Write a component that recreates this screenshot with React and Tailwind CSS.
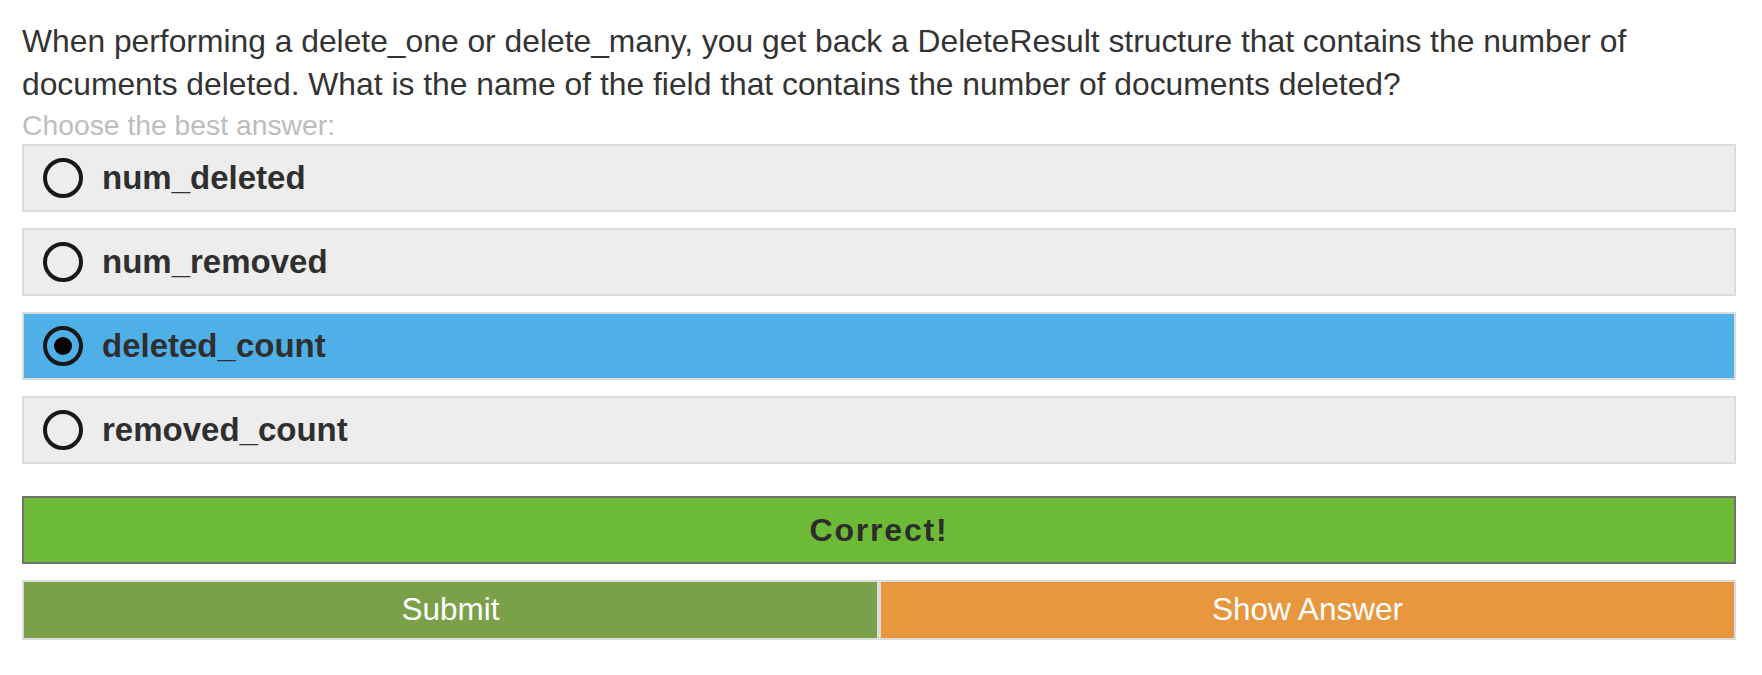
import { useState } from "react";

const options = ["num_deleted", "num_removed", "deleted_count", "removed_count"];

function Radio({ checked }) {
  return (
    <div className="w-[40px] h-[40px] rounded-full border-[4px] border-[#181818] flex items-center justify-center shrink-0">
      {checked && <div className="w-[18px] h-[18px] rounded-full bg-[#050505]" />}
    </div>
  );
}

export default function App() {
  const [selected, setSelected] = useState(2);

  return (
    <div className="bg-white min-h-[675px] pt-[20px] pl-[22px] font-['Liberation_Sans',Arial,sans-serif]">
      <div className="w-[1714px]">
        {/* Question */}
        <p className="text-[31.8px] leading-[43px] text-[#333]">
          When performing a delete_one or delete_many, you get back a DeleteResult structure that contains the number of
          documents deleted. What is the name of the field that contains the number of documents deleted?
        </p>
        <p className="text-[28.3px] leading-[38px] text-[#bdbdbd]">Choose the best answer:</p>

        {/* Options */}
        <div className="flex flex-col gap-[16px]">
          {options.map((opt, i) => (
            <button
              key={opt}
              onClick={() => setSelected(i)}
              className={`h-[68px] border-2 border-[#dcdcdc] flex items-center pl-[19px] gap-[19px] text-left ${
                selected === i ? "bg-[#4fafe7]" : "bg-[#ededed]"
              }`}
            >
              <Radio checked={selected === i} />
              <span className="text-[33px] font-bold text-[#2f2f2f]">{opt}</span>
            </button>
          ))}
        </div>

        {/* Result */}
        <div className="mt-[32px] h-[68px] border-2 border-[#727272] bg-[#6dba37] flex items-center justify-center">
          <span className="text-[32px] font-bold tracking-[1.8px] text-[#2d2d2d]">Correct!</span>
        </div>

        {/* Actions */}
        <div className="mt-[16px] grid grid-cols-2">
          <button className="h-[60px] border-2 border-[#dcdcdc] bg-[#7aa049] text-white text-[31.5px]">Submit</button>
          <button className="h-[60px] border-2 border-[#dcdcdc] bg-[#e8973f] text-white text-[31.5px]">Show Answer</button>
        </div>
      </div>
    </div>
  );
}
